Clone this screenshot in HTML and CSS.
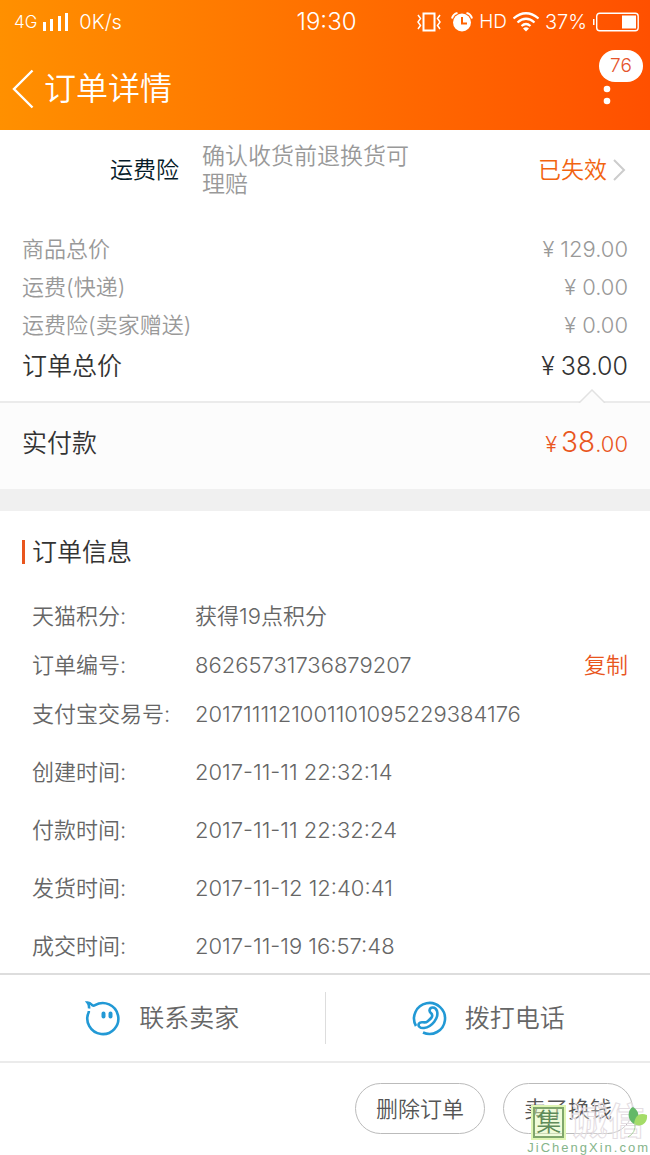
FILE: index.html
```html
<!DOCTYPE html>
<html lang="zh-CN">
  <head>
    <meta charset="UTF-8" />
    <meta name="viewport" content="width=device-width, initial-scale=1.0" />
    <title>订单详情</title>
    <link rel="stylesheet" href="styles.css">
  </head>
  <body>
    <header class="header">
      <div class="status-bar">
        <div class="status-left">
          <span class="network">4G</span>
          <svg class="signal" width="26" height="18" viewBox="0 0 26 18" fill="#fff">
            <path d="M0 9h3v9H0zM7 6h3v12H7zM15 3h3v15h-3zM22 0h3v18h-3z" />
          </svg>
          <span>0K/s</span>
        </div>
        <span class="clock">19:30</span>
        <div class="status-right">
          <svg width="24" height="20" viewBox="0 0 24 20" fill="none" stroke="#fff">
            <rect x="6.500" y="1.500" width="11" height="17" stroke-width="2" />
            <path d="M1 3l2.500 3.500L1 10l2.500 3.500L1 17M23 3l-2.500 3.500L23 10l-2.500 3.500L23 17" stroke-width="1.500" />
          </svg>
          <svg class="alarm" width="22" height="20" viewBox="0 0 22 20">
            <circle cx="11" cy="10.500" r="9" fill="#fff" />
            <path d="M1 6.500Q2 2 6.500 1M21 6.500Q20 2 15.500 1" fill="none" stroke="#fff" stroke-width="2" />
            <path d="M11 5v6.500h5" fill="none" stroke="#ff6200" stroke-width="2" />
          </svg>
          <span class="hd">HD</span>
          <svg width="26" height="20" viewBox="1 0 26 20" fill="none" stroke="#fff" stroke-width="2.200">
            <path d="M1.500 6.500Q14-4 26.500 6.500M5.500 10.500Q14 3 22.500 10.500M9.500 14Q14 10 18.500 14" />
            <path d="M11 16.500Q14 14 17 16.500L14 19.500z" fill="#fff" stroke="none" />
          </svg>
          <span>37%</span>
          <svg width="46" height="20" viewBox="0 0 46 20">
            <rect x="3.700" y="1.200" width="41.500" height="17.500" rx="3" fill="none" stroke="#fff" stroke-width="1.400" />
            <path d="M0 7h1.500v6H0z" fill="#fff" />
            <path d="M29 3.500h14v13H29z" fill="#fff" />
          </svg>
        </div>
      </div>
      <div class="nav">
        <a href="#" class="back" aria-label="返回">
          <svg width="22" height="40" viewBox="0 0 22 40" fill="none" stroke="#fff" stroke-width="2.400">
            <path d="M20.500 1.500L2 20l18.500 18.500" />
          </svg>
        </a>
        <h1>订单详情</h1>
        <button class="more" aria-label="更多">
          <svg width="8" height="36" viewBox="0 0 8 36" fill="#fff">
            <circle cx="4" cy="18" r="3.300" />
            <circle cx="4" cy="30" r="3.300" />
          </svg>
          <span class="badge">76</span>
        </button>
      </div>
    </header>

    <main>
      <section class="insurance">
        <span class="insurance-name">运费险</span>
        <p>确认收货前退换货可理赔</p>
        <a href="#">已失效
          <svg width="13" height="22" viewBox="0 0 13 22" fill="none" stroke="#ccc" stroke-width="2">
            <path d="M1 1l10 10L1 21" />
          </svg>
        </a>
      </section>

      <dl class="prices">
        <div><dt>商品总价</dt><dd><i>¥</i>129.00</dd></div>
        <div><dt>运费(快递)</dt><dd><i>¥</i>0.00</dd></div>
        <div><dt>运费险(卖家赠送)</dt><dd><i>¥</i>0.00</dd></div>
        <div class="total"><dt>订单总价</dt><dd><i>¥</i>38.00</dd></div>
      </dl>

      <section class="paid">
        <svg class="notch" width="28" height="14" viewBox="0 0 28 14">
          <path d="M1 14L14 1l13 13" fill="#fcfcfc" stroke="#e2e2e2" stroke-width="1.500" />
        </svg>
        <span>实付款</span>
        <span class="paid-amount"><i>¥</i><b>38</b>.00</span>
      </section>

      <section class="order">
        <h2>订单信息</h2>
        <dl class="info">
          <div><dt>天猫积分:</dt><dd>获得19点积分</dd></div>
          <div><dt>订单编号:</dt><dd>86265731736879207</dd><button class="copy">复制</button></div>
          <div><dt>支付宝交易号:</dt><dd>2017111121001101095229384176</dd></div>
          <div class="time"><dt>创建时间:</dt><dd>2017-11-11 22:32:14</dd></div>
          <div class="time"><dt>付款时间:</dt><dd>2017-11-11 22:32:24</dd></div>
          <div class="time"><dt>发货时间:</dt><dd>2017-11-12 12:40:41</dd></div>
          <div class="time"><dt>成交时间:</dt><dd>2017-11-19 16:57:48</dd></div>
        </dl>
      </section>
    </main>

    <div class="contact">
      <button>
        <svg width="36" height="36" viewBox="0 0 36 36" fill="none" stroke="#2299d5" stroke-width="2.600">
          <path d="M10 5.200A15.500 15.500 0 1 1 3.800 12L3.800 11M10 5.200Q8 6.500 6.500 4.500Q5 2.500 2.500 2.500Q4.500 5 4 8.500" />
          <path d="M18.500 13.500v3M25.500 13.500v3" stroke-width="4" stroke-linecap="round" />
        </svg>
        联系卖家
      </button>
      <button>
        <svg width="36" height="36" viewBox="0 0 36 36" fill="none" stroke="#2299d5" stroke-width="2.600">
          <path d="M5 26A15.500 15.500 0 1 1 12 32.500" />
          <path d="M18.500 10.500C19 6.500 24.500 6.500 26 11C28 18 21 27 13 28C9 28.500 6.500 26 8 23.500C10 20.500 13.500 24 16.500 21.500C19.500 19 22 17 21 14.500C20.500 13 18.500 12.500 18.500 10.500z" />
        </svg>
        拨打电话
      </button>
    </div>

    <footer class="footer">
      <button>删除订单</button>
      <button>卖了换钱</button>
      <div class="watermark">
        <div class="mark-top">
          <span class="seal">集</span>
          <span class="mark-name">诚信</span>
          <svg class="leaf" width="22" height="32" viewBox="0 0 22 32">
            <path d="M8 18C0 13 2 3 7 1C14 5 14 13 8 18z" fill="#63b868" />
            <path d="M8 18C9 9 14 6 21 9C22 17 15 22 8 18z" fill="#a4dc68" />
            <path d="M9 17Q10 27 2 31" fill="none" stroke="#a9cf9c" />
          </svg>
        </div>
        <span class="mark-url">JiChengXin.com</span>
      </div>
    </footer>
  </body>
</html>
```
FILE: styles.css
```css
* {
  box-sizing: border-box;
}
body {
  display: flex;
  flex-direction: column;
  min-height: 100vh;
  margin: 0;
  background: #fff;
  color: #666;
  font-family: Inter, "Noto Sans CJK SC", sans-serif;
  font-size: 22px;
  font-weight: 350;
  line-height: 30px;
}
h1,
h2,
p,
dl,
dd {
  margin: 0;
  font-weight: 350;
}
i,
b {
  font-style: normal;
  font-weight: 350;
}
a {
  text-decoration: none;
}
button {
  padding: 0;
  border: none;
  background: none;
  color: inherit;
  font: inherit;
  cursor: pointer;
}
svg {
  flex: none;
}

/* header */
.header {
  height: 130px;
  background: linear-gradient(90deg, #ff9000, #ff5000);
  color: #fff;
}
.status-bar {
  display: grid;
  grid-template-columns: 1fr auto 1fr;
  align-items: center;
  height: 44px;
  padding: 0 11px 0 14px;
  font-size: 20px;
}
.status-left,
.status-right {
  display: flex;
  align-items: center;
}
.status-right {
  justify-content: flex-end;
  gap: 6px;
}
.network {
  font-size: 17px;
}
.signal {
  margin: 0 10px 0 6px;
}
.clock {
  font-size: 24px;
}
.alarm {
  margin-left: 4px;
}
.hd {
  font-size: 19px;
}
.nav {
  display: flex;
  align-items: center;
  height: 86px;
  padding: 3px 39px 0 12px;
}
.back {
  display: flex;
}
.nav h1 {
  flex: 1;
  margin-left: 10px;
  font-size: 32px;
  line-height: 40px;
}
.more {
  position: relative;
  display: flex;
}
.badge {
  position: absolute;
  top: -21px;
  left: -4px;
  width: 44px;
  border-radius: 16px;
  background: #fff;
  color: #e5532a;
  font-size: 19px;
  line-height: 32px;
}

/* prices */
.insurance {
  display: flex;
  align-items: center;
  padding: 12px 24px 0 110px;
  font-size: 23px;
  line-height: 28px;
}
.insurance-name {
  color: #051b28;
}
.insurance p {
  width: 216px;
  margin: 0 auto 0 23px;
  color: #999;
}
.insurance a {
  display: flex;
  align-items: center;
  gap: 6px;
  color: #f2640f;
}
.prices {
  padding: 32px 22px 13px;
  color: #999;
}
.prices div {
  display: flex;
  align-items: center;
  justify-content: space-between;
  height: 38px;
}
.prices i {
  margin-right: 6px;
}
.prices .total {
  height: 44px;
  color: #333;
  font-size: 25px;
}
.paid {
  position: relative;
  display: flex;
  align-items: center;
  justify-content: space-between;
  height: 88px;
  padding: 0 22px 6px;
  border-top: 2px solid #ebebeb;
  background: #fcfcfc;
  color: #333;
  font-size: 25px;
}
.notch {
  position: absolute;
  top: -14px;
  right: 44px;
}
.paid-amount {
  color: #e9561e;
  font-size: 22px;
}
.paid-amount i {
  margin-right: 4px;
}
.paid-amount b {
  font-size: 28px;
}

/* order info */
.order {
  padding: 25px 22px 0;
  border-top: 22px solid #f0f0f0;
}
.order h2 {
  display: flex;
  align-items: center;
  gap: 7px;
  height: 32px;
  color: #333;
  font-size: 25px;
}
.order h2::before {
  width: 3px;
  height: 24px;
  background: #e9561e;
  content: "";
}
.info {
  padding: 23px 0 0 10px;
}
.info div {
  display: flex;
  align-items: center;
  height: 49px;
}
.info .time {
  margin-top: 9px;
}
.info dt {
  width: 163px;
}
.info dd {
  flex: 1;
}
.copy {
  color: #e9561e;
}

/* bottom bars */
.contact {
  display: flex;
  align-items: center;
  height: 90px;
  margin-top: auto;
  border-top: 2px solid #ddd;
  border-bottom: 2px solid #ebebeb;
  background: #fff;
  font-size: 25px;
}
.contact button {
  display: flex;
  flex: 1;
  align-items: center;
  justify-content: center;
  gap: 18px;
  height: 52px;
}
.contact button + button {
  border-left: 1px solid #ddd;
}
.footer {
  position: relative;
  display: flex;
  justify-content: flex-end;
  gap: 18px;
  height: 92px;
  padding: 20px 17px 0;
}
.footer button {
  width: 130px;
  height: 51px;
  border: 1px solid #bbb;
  border-radius: 26px;
  color: #555;
}
.watermark {
  position: absolute;
  right: 0;
  bottom: 0;
  pointer-events: none;
}
.mark-top {
  display: flex;
  align-items: center;
  gap: 6px;
  padding-left: 6px;
}
.seal {
  width: 31px;
  border: 2px solid #7fa66c;
  outline: 2px solid #dff5b4;
  background: rgba(224, 247, 182, 0.5);
  color: #5f8b59;
  font-size: 25px;
  line-height: 27px;
  text-align: center;
}
.mark-name {
  color: rgba(255, 255, 255, 0.3);
  font-size: 37px;
  font-weight: 700;
  line-height: 36px;
  -webkit-text-stroke: 1px #e4dde2;
}
.leaf {
  position: absolute;
  top: 2px;
  right: 2px;
}
.mark-url {
  display: block;
  color: #86b58b;
  font-family: "Liberation Sans", sans-serif;
  font-size: 13px;
  font-weight: 400;
  letter-spacing: 2px;
  line-height: 15px;
  white-space: nowrap;
}
```
